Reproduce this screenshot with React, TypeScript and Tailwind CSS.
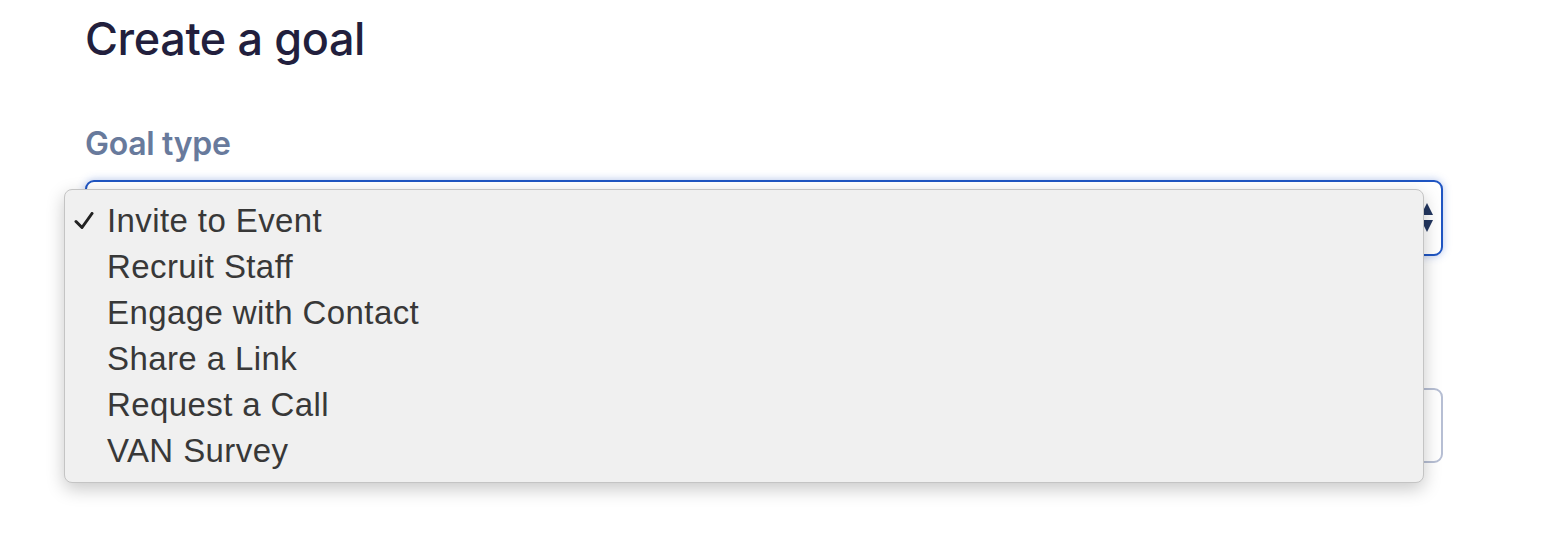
import { useState } from "react";

const goalTypes = [
  "Invite to Event",
  "Recruit Staff",
  "Engage with Contact",
  "Share a Link",
  "Request a Call",
  "VAN Survey",
];

function CheckMark() {
  return (
    <svg width="20" height="18" viewBox="0 0 20 18" className="shrink-0">
      <polyline
        points="2,9.5 8,15.5 18,1.5"
        fill="none"
        stroke="#222"
        strokeWidth="3"
        strokeLinecap="round"
        strokeLinejoin="round"
      />
    </svg>
  );
}

function SelectArrows() {
  return (
    <svg width="12" height="30" viewBox="0 0 12 30">
      <polygon points="6,0 12,12 0,12" fill="#233760" />
      <polygon points="0,17 12,17 6,29" fill="#233760" />
    </svg>
  );
}

export default function App() {
  const [selected] = useState("Invite to Event");

  return (
    <div className="min-h-[538px] bg-white font-['Inter','Liberation_Sans',sans-serif]">
      <div className="w-[1358px] ml-[85px] pt-[11px]">
        <h1 className="text-[45px] leading-[55px] font-medium tracking-[-0.4px] text-[#221f3d]">
          Create a goal
        </h1>

        <label className="block mt-[59px] text-[32px] leading-[38px] font-semibold tracking-[-0.3px] text-[#687a9c]">
          Goal type
        </label>

        <div className="relative mt-[17px]">
          <div className="h-[76px] rounded-[9px] border-2 border-[#1f55c2] bg-white shadow-[0_0_8px_rgba(40,90,200,0.35)] flex items-center justify-end pr-[8px]">
            <SelectArrows />
          </div>

          <div className="mt-[132px] h-[75px] rounded-[9px] border-2 border-[#b7bfd4] bg-white" />

          <ul className="absolute left-[-21px] top-[9px] w-[1360px] pt-[8px] pb-[8px] rounded-[8px] border border-[#c4c4c4] bg-[#f0f0f0] shadow-[0_6px_18px_rgba(0,0,0,0.22)] font-['Liberation_Sans',Arial,sans-serif] text-[33px] leading-[46px] tracking-[0.4px] text-[#383838]">
            {goalTypes.map((g) => (
              <li key={g} className="flex items-center h-[46px]">
                <span className="w-[42px] pl-[9px] flex items-center">
                  {g === selected && <CheckMark />}
                </span>
                <span>{g}</span>
              </li>
            ))}
          </ul>
        </div>
      </div>
    </div>
  );
}
